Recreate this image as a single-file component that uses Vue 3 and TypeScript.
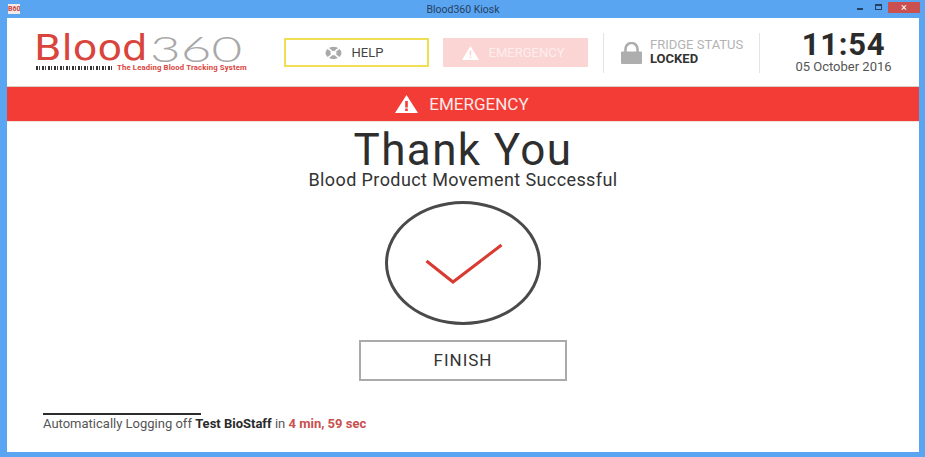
<template>
  <div class="window">
    <div class="titlebar">
      <div class="app-icon"><span>B60</span></div>
      <div class="title">Blood360 Kiosk</div>
      <div class="controls">
        <span class="minimize"></span>
        <span class="maximize"></span>
        <span class="close">×</span>
      </div>
    </div>

    <div class="content">
      <header class="header">
        <div class="logo">
          <div class="logo-word"><span class="red">Blood</span><span class="gray">360</span></div>
          <div class="logo-tag">
            <span class="barcode"></span>
            <span class="tagline">The Leading Blood Tracking System</span>
          </div>
        </div>

        <button class="btn help">
          <svg width="17" height="14" viewBox="0 0 18 14">
            <ellipse cx="9" cy="7" rx="8.500" ry="6.500" fill="#a9a9a9" />
            <path d="M3 1.800 7 5M15 1.800 11 5M3 12.200 7 9M15 12.200 11 9" stroke="#fff" stroke-width="1.800" />
            <ellipse cx="9" cy="7" rx="3.200" ry="2.500" fill="#fff" />
          </svg>
          HELP
        </button>

        <button class="btn emergency">
          <svg width="17" height="14" viewBox="0 0 17 14">
            <path d="M8.500 0 17 14H0Z" fill="#fff" />
            <path d="M7.700 4.500h1.600v5H7.700zM7.700 10.500h1.600v1.600H7.700z" fill="#fbd5d3" />
          </svg>
          EMERGENCY
        </button>

        <div class="fridge">
          <svg width="21" height="22" viewBox="0 0 21 22">
            <path d="M4.500 10V7a6 6 0 0 1 12 0v3" fill="none" stroke="#aeaeae" stroke-width="2.600" />
            <rect x="0" y="9.500" width="21" height="12.500" rx="1" fill="#aeaeae" />
          </svg>
          <div class="fridge-text">
            <div class="fridge-label">FRIDGE STATUS</div>
            <div class="fridge-value">LOCKED</div>
          </div>
        </div>

        <div class="clock">
          <div class="time">11:54</div>
          <div class="date">05 October 2016</div>
        </div>
      </header>

      <div class="banner">
        <svg width="23" height="18" viewBox="0 0 23 18">
          <path d="M11.500 0 23 18H0Z" fill="#fff" />
          <path d="M10.200 6h2.600v6.500h-2.600zM10.200 13.600h2.600v2.400h-2.600z" fill="#f23c35" />
        </svg>
        <span>EMERGENCY</span>
      </div>

      <main class="main">
        <h1 class="heading">Thank You</h1>
        <p class="subheading">Blood Product Movement Successful</p>
        <div class="check-circle">
          <svg width="78" height="42" viewBox="0 0 78 42">
            <path d="M1.500 19 28 40 76.500 3" fill="none" stroke="#d93a32" stroke-width="3" />
          </svg>
        </div>
        <button class="finish">FINISH</button>
      </main>

      <footer class="footer">
        <div class="rule"></div>
        <div class="logoff">
          Automatically Logging off <strong>Test BioStaff</strong> in
          <span class="countdown">4 min, 59 sec</span>
        </div>
      </footer>
    </div>
  </div>
</template>

<script setup lang="ts">
</script>

<style>
html,
body {
  margin: 0;
  overflow: hidden;
}
</style>

<style scoped>
.window {
  width: 925px;
  height: 457px;
  box-sizing: border-box;
  padding: 0 6px 5px 7px;
  background-color: #5aa5f1;
  display: flex;
  flex-direction: column;
  font-family: Roboto, "Liberation Sans", sans-serif;
  color: #333;
}

.titlebar {
  height: 18px;
  flex: none;
  display: flex;
  align-items: center;
  position: relative;
}

.app-icon {
  width: 12px;
  height: 10px;
  margin-left: 1px;
  background-color: #f4e9e6;
  color: #c8453f;
  font-size: 7px;
  font-weight: 700;
  line-height: 10px;
  overflow: hidden;
  text-align: center;
}

.title {
  position: absolute;
  left: 0;
  right: 0;
  top: 2px;
  text-align: center;
  font-size: 10.5px;
  line-height: 15px;
  color: #27405f;
}

.controls {
  margin-left: auto;
  margin-right: -1px;
  display: flex;
  align-items: flex-start;
  align-self: flex-start;
  position: relative;
}

.minimize {
  width: 6px;
  height: 2px;
  margin-top: 8px;
  background-color: #26405f;
}

.maximize {
  width: 5px;
  height: 3px;
  margin: 4px 0 0 12px;
  border: 1px solid #26405f;
  border-top-width: 2px;
}

.close {
  width: 32px;
  height: 11px;
  margin-left: 6px;
  margin-top: 2px;
  background-color: #c9504f;
  color: #fff;
  font-size: 11px;
  line-height: 11px;
  text-align: center;
}

.content {
  flex: 1;
  min-height: 0;
  background-color: #fff;
  display: flex;
  flex-direction: column;
}

.header {
  height: 69px;
  flex: none;
  display: flex;
  align-items: center;
  box-sizing: border-box;
  padding-left: 27px;
}

.logo {
  width: 250px;
  flex: none;
  margin-bottom: 1px;
}

.logo-word {
  display: flex;
  align-items: center;
  height: 31px;
  white-space: nowrap;
}

.red {
  width: 116px;
  flex: none;
  color: #d9443c;
  font-family: "DejaVu Sans", sans-serif;
  font-size: 35px;
  line-height: 31px;
  transform: scaleX(1.15);
  transform-origin: left center;
}

.gray {
  color: #a8a8a8;
  font-family: Lato, sans-serif;
  font-weight: 300;
  font-size: 36px;
  line-height: 31px;
  transform: scaleX(1.47);
  transform-origin: left center;
}

.logo-tag {
  display: flex;
  align-items: center;
  gap: 4px;
  padding-left: 2px;
}

.barcode {
  width: 77px;
  height: 4px;
  background: repeating-linear-gradient(90deg, #333 0 2px, #fff 2px 3px, #444 3px 4px, #fff 4px 6px);
}

.tagline {
  font-size: 7.7px;
  font-weight: 700;
  line-height: 8px;
  letter-spacing: 0.17px;
  color: #d9443c;
  white-space: nowrap;
}

.btn {
  width: 145px;
  height: 29px;
  flex: none;
  box-sizing: border-box;
  display: flex;
  align-items: center;
  justify-content: center;
  gap: 10px;
  padding: 0 5px 0 0;
  font-family: inherit;
  font-size: 13px;
}

.help {
  border: 2px solid #f0df55;
  background-color: #fff;
  color: #444;
}

.emergency {
  margin-left: 14px;
  border: none;
  background-color: #fbd5d3;
  color: #fdeeee;
}

.fridge {
  width: 157px;
  height: 40px;
  flex: none;
  box-sizing: border-box;
  margin-left: 15px;
  padding-left: 17px;
  display: flex;
  align-items: center;
  gap: 8px;
  border-left: 1px solid #e4e4e4;
  border-right: 1px solid #e4e4e4;
}

.fridge-text {
  padding-bottom: 3px;
}

.fridge-label {
  font-size: 13px;
  line-height: 14px;
  color: #b3b3b3;
}

.fridge-value {
  font-size: 13px;
  font-weight: 700;
  line-height: 13px;
  color: #333;
}

.clock {
  flex: 1;
  text-align: center;
  padding-left: 8px;
  padding-bottom: 2px;
  box-sizing: border-box;
}

.time {
  font-size: 31px;
  font-weight: 700;
  line-height: 29px;
  letter-spacing: 0.7px;
  color: #2b2b2b;
}

.date {
  font-size: 13px;
  line-height: 15px;
  color: #555;
}

.banner {
  height: 34px;
  flex: none;
  display: flex;
  align-items: center;
  justify-content: center;
  gap: 11px;
  padding-right: 2px;
  box-sizing: border-box;
  background-color: #f23c35;
  box-shadow: 0 -1px 0 #d8cfc9, 0 1px 0 #efe3da;
  color: #fbe9e8;
  font-size: 17px;
}

.main {
  display: flex;
  flex-direction: column;
  align-items: center;
}

.heading {
  margin: 8px 0 0;
  font-size: 44px;
  font-weight: 400;
  line-height: 42px;
  letter-spacing: 1.4px;
  color: #2e2e2e;
}

.subheading {
  margin: -1px 0 0;
  font-size: 18px;
  line-height: 20px;
  letter-spacing: 0.4px;
  color: #333;
}

.check-circle {
  width: 156px;
  height: 124px;
  box-sizing: border-box;
  margin-top: 11px;
  padding-left: 2px;
  border: 3px solid #4a4a4a;
  border-radius: 50%;
  display: flex;
  align-items: center;
  justify-content: center;
}

.finish {
  width: 208px;
  height: 41px;
  margin-top: 15px;
  padding-bottom: 2px;
  box-sizing: border-box;
  border: 2px solid #aaa;
  background-color: #fff;
  font-family: inherit;
  font-size: 17px;
  letter-spacing: 1px;
  color: #333;
}

.footer {
  margin-top: 32px;
  padding-left: 36px;
}

.rule {
  width: 158px;
  height: 2px;
  background-color: #2c2c2c;
}

.logoff {
  margin-top: 1px;
  font-size: 13px;
  line-height: 16px;
  color: #555;
}

.logoff strong {
  font-weight: 700;
  color: #2b2b2b;
}

.countdown {
  font-weight: 700;
  color: #c9504f;
}
</style>
